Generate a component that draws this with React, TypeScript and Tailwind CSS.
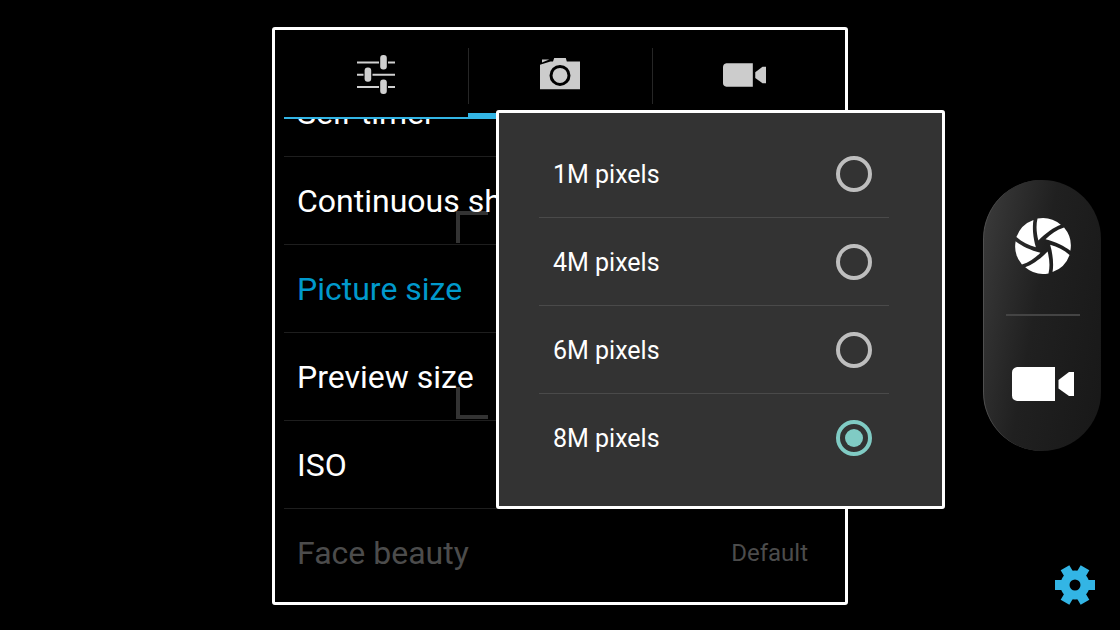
import { useState } from 'react';
import clsx from 'clsx';

const TABS = ['General', 'Photo', 'Video'] as const;

const SETTINGS = [
  { label: 'Self-timer' },
  { label: 'Continuous shot' },
  { label: 'Picture size' },
  { label: 'Preview size' },
  { label: 'ISO' },
  { label: 'Face beauty', value: 'Default', disabled: true },
];

const PICTURE_SIZES = ['1M pixels', '4M pixels', '6M pixels', '8M pixels'];

const ANGLES = [0, 60, 120, 180, 240, 300];

function SlidersIcon() {
  return (
    <svg viewBox="0 0 39 39" className="size-[39px]" fill="#d0d0d0" aria-hidden="true">
      <path d="M0 6.4h22v2H0zM31 6.4h7v2h-7zM0 18.7h6.5v2H0zM15.5 18.7H38v2H15.5zM0 31h22v2H0zM31 31h7v2h-7z" />
      <rect x="23.2" y="0" width="6.6" height="14.4" rx="3" />
      <rect x="7.6" y="12.4" width="6.6" height="14.4" rx="3" />
      <rect x="23.2" y="24.6" width="6.6" height="14.4" rx="3" />
    </svg>
  );
}

function CameraIcon() {
  return (
    <svg viewBox="0 0 40 34" className="h-[34px] w-10" fill="#cccccc" aria-hidden="true">
      <path d="M2 1.5H9.300L2 4.600z" />
      <path d="M0 6.800 10.500 3.400H13L14.200 0h11.600L26.800 3.400H40V31.200H0z" />
      <circle cx="20" cy="17.4" r="9" fill="#cccccc" stroke="#000000" strokeWidth="3" />
    </svg>
  );
}

function VideoIcon({ className }: { className: string }) {
  return (
    <svg viewBox="0 0 62 34" className={className} fill="currentColor" aria-hidden="true">
      <path d="M5 0H43V34H5Q0 33 0 28.500V5.500Q0 1 5 0z" />
      <path d="M46.500 13 57 5H62V29H57L46.500 21.500z" />
    </svg>
  );
}

function ShutterIcon() {
  return (
    <svg viewBox="-29 -29 58 58" className="size-[58px]" fill="#ffffff" aria-hidden="true">
      {ANGLES.map((angle) => (
        <path
          key={angle}
          transform={`rotate(${angle})`}
          d="M-5.500-27.500A28 28 0 0 1 17.800-21.300C11-18.800 2.500-13-4.600-5.600C-6.500-13-7.200-20-5.500-27.500z"
        />
      ))}
    </svg>
  );
}

function GearIcon() {
  return (
    <svg viewBox="-20 -20 40 40" className="size-10" fill="#33b5e5" aria-hidden="true">
      <circle r="10" fill="none" stroke="#33b5e5" strokeWidth="9" />
      {ANGLES.map((angle) => (
        <path key={angle} transform={`rotate(${angle})`} d="M9-7.500 13.500-5H20V5H13.500L9 7.500z" />
      ))}
    </svg>
  );
}

function FocusFrame() {
  return (
    <svg
      viewBox="0 0 208 208"
      className="pointer-events-none absolute top-1/2 left-1/2 size-52 -translate-1/2"
      fill="none"
      stroke="#333333"
      strokeWidth="4"
      aria-hidden="true"
    >
      <path d="M2 32V2H32M176 2H206V32M206 176V206H176M32 206H2V176" />
    </svg>
  );
}

function TabBar({ active, onChange }: { active: string; onChange: (tab: string) => void }) {
  return (
    <div role="tablist" className="grid h-[89px] grid-cols-3">
      {TABS.map((tab, i) => (
        <button
          key={tab}
          type="button"
          role="tab"
          aria-label={tab}
          aria-selected={tab === active}
          onClick={() => onChange(tab)}
          className={clsx(
            'relative flex items-center justify-center text-[#cccccc]',
            i > 0 && 'before:absolute before:top-[18px] before:left-0 before:h-14 before:w-px before:bg-[#262626]',
            'after:absolute after:inset-x-0 after:bottom-0 after:bg-[#33b5e5]',
            tab === active ? 'after:h-1.5' : 'after:h-0.5',
          )}
        >
          {tab === 'General' && <SlidersIcon />}
          {tab === 'Photo' && <CameraIcon />}
          {tab === 'Video' && <VideoIcon className="h-6 w-[43px]" />}
        </button>
      ))}
    </div>
  );
}

function PictureSizeDialog({ value, onChange }: { value: string; onChange: (size: string) => void }) {
  return (
    <fieldset className="absolute top-20 left-[221px] w-[449px] rounded-[3px] border-3 border-white bg-[#333333] pt-[17px] pr-[53px] pb-6 pl-10">
      <legend className="sr-only">Picture size</legend>
      {PICTURE_SIZES.map((size) => (
        <label
          key={size}
          className="flex h-[88px] items-center justify-between border-b border-[#4a4a4a] pr-[17px] pl-3.5 text-[25px] text-white last:border-transparent"
        >
          <span className="pt-0.5">{size}</span>
          <input
            type="radio"
            name="picture-size"
            checked={size === value}
            onChange={() => onChange(size)}
            className="grid size-9 appearance-none place-items-center rounded-full border-4 border-[#bebebe] before:size-[18px] before:rounded-full checked:border-[#80cbc4] checked:before:bg-[#80cbc4]"
          />
        </label>
      ))}
    </fieldset>
  );
}

export default function App() {
  const [tab, setTab] = useState<string>('Photo');
  const [selected, setSelected] = useState('Picture size');
  const [size, setSize] = useState('8M pixels');

  return (
    <main className="relative grid min-h-screen grid-cols-[1fr_576px_1fr] overflow-hidden bg-black font-['Roboto',sans-serif]">
      <FocusFrame />

      {/* settings panel */}
      <section className="relative col-start-2 mt-[27px] mb-[25px] flex flex-col self-center rounded-[3px] border-3 border-white px-[9px] pb-1.5">
        <TabBar active={tab} onChange={setTab} />
        {/* list is scrolled to its end */}
        <div className="flex h-[477px] flex-col justify-end overflow-hidden">
          {SETTINGS.map(({ label, value, disabled }) => (
            <button
              key={label}
              type="button"
              disabled={disabled}
              onClick={() => setSelected(label)}
              className={clsx(
                'flex h-[88px] shrink-0 items-center justify-between border-t border-[#1e1e1e] pr-7 pl-[13px] text-[32px]',
                disabled ? 'text-[#4c4c4c]' : label === selected ? 'text-[#0099cc]' : 'text-white',
              )}
            >
              <span>{label}</span>
              {value && <span className="text-2xl">{value}</span>}
            </button>
          ))}
        </div>
        <PictureSizeDialog value={size} onChange={setSize} />
      </section>

      {/* capture controls */}
      <aside className="grid grid-rows-[1fr_auto_1fr] justify-items-end">
        <div className="row-start-2 mr-[19px] flex h-[271px] w-[118px] flex-col items-center rounded-full border-l border-[#505050] bg-linear-100 from-[#3c3c3c] via-[#202020] via-45% to-[#181818]">
          <button type="button" aria-label="Take photo" className="flex w-full flex-1 items-center justify-center pb-0.5">
            <ShutterIcon />
          </button>
          <hr className="w-[74px] border-t-2 border-[#444444]" />
          <button type="button" aria-label="Record video" className="flex w-full flex-1 items-center justify-center pt-0.5 text-white">
            <VideoIcon className="h-[34px] w-[62px]" />
          </button>
        </div>
        <button type="button" aria-label="Settings" className="row-start-3 mr-[25px] mb-[25px] self-end">
          <GearIcon />
        </button>
      </aside>
    </main>
  );
}
